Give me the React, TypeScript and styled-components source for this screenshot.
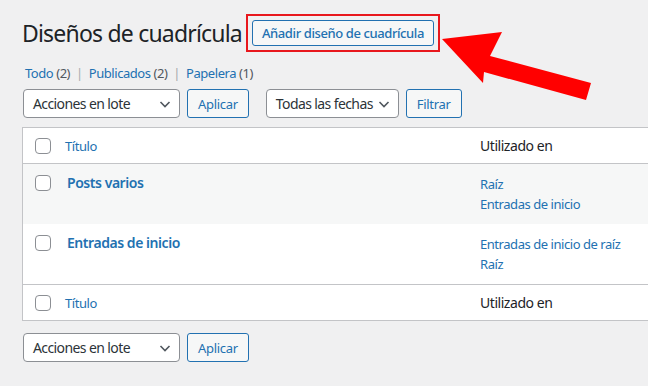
import styled, { createGlobalStyle } from 'styled-components';

const GlobalStyle = createGlobalStyle`
  html, body {
    margin: 0;
    padding: 0;
    background: #f0f0f1;
    overflow: hidden;
  }
  body {
    font-family: "Noto Sans", "Open Sans", sans-serif;
    font-size: 13px;
    letter-spacing: -0.45px;
    color: #3c434a;
  }
`;

const Wrap = styled.div`
  position: relative;
  width: 648px;
  height: 386px;
  padding: 14px 0 0 22px;
  box-sizing: border-box;
`;

const HeadingRow = styled.div`
  display: flex;
  align-items: center;
  gap: 4px;
`;

const Title = styled.h1`
  margin: 0;
  font-size: 23px;
  font-weight: 400;
  color: #1d2327;
  letter-spacing: -0.8px;
  line-height: 36px;
`;

const Highlight = styled.div`
  border: 2px solid #e8171d;
  padding: 4px;
`;

const AddButton = styled.button`
  font-family: inherit;
  font-size: 13px;
  font-weight: 500;
  letter-spacing: -0.4px;
  color: #2271b1;
  background: #f6f7f7;
  border: 1px solid #2271b1;
  border-radius: 3px;
  height: 26px;
  padding: 0 9px;
  display: block;
`;

const Arrow = styled.svg`
  position: absolute;
  left: 438px;
  top: 26px;
`;

const Filters = styled.ul`
  display: flex;
  list-style: none;
  margin: 11px 0 0 3px;
  padding: 0;
  color: #646970;
  line-height: 20px;
`;

const FilterItem = styled.li`
  a {
    color: #2271b1;
  }
  span {
    color: #50575e;
  }
  &:not(:last-child)::after {
    content: '|';
    color: #a7aaad;
    margin: 0 6px;
  }
`;

const Tablenav = styled.div<{ $top?: boolean }>`
  display: flex;
  align-items: center;
  gap: 7px;
  margin: ${(p) => (p.$top ? '6px 0 9px 1px' : '12px 0 0 1px')};
`;

const Select = styled.div<{ $w: number }>`
  width: ${(p) => p.$w}px;
  height: 29px;
  box-sizing: border-box;
  border: 1px solid #8c8f94;
  border-radius: 4px;
  background: #fff;
  display: flex;
  align-items: center;
  justify-content: space-between;
  padding: 0 7px 0 9px;
  font-size: 14px;
  letter-spacing: -0.6px;
  white-space: nowrap;
  color: #2c3338;
`;

const SecondaryButton = styled.button<{ $gap?: number }>`
  font-family: inherit;
  font-size: 13px;
  letter-spacing: -0.3px;
  color: #2271b1;
  background: #f6f7f7;
  border: 1px solid #2271b1;
  border-radius: 3px;
  height: 29px;
  padding: 0 10px;
  margin-right: ${(p) => p.$gap ?? 0}px;
`;

const Table = styled.div`
  width: 700px;
  background: #fff;
  border: 1px solid #c3c4c7;
  border-right: none;
  box-sizing: border-box;
`;

const Row = styled.div<{ $alt?: boolean; $head?: boolean; $foot?: boolean }>`
  display: grid;
  grid-template-columns: 42px 415px 1fr;
  background: ${(p) => (p.$alt ? '#f6f7f7' : '#fff')};
  height: ${(p) => (p.$head || p.$foot ? 36 : 60)}px;
  border-bottom: ${(p) => (p.$head ? '1px solid #c3c4c7' : 'none')};
  border-top: ${(p) => (p.$foot ? '1px solid #c3c4c7' : 'none')};
  align-items: ${(p) => (p.$head || p.$foot ? 'center' : 'start')};
  padding-top: ${(p) => (p.$head || p.$foot ? 0 : 9)}px;
  box-sizing: border-box;
`;

const Check = styled.span<{ $head?: boolean }>`
  display: block;
  width: 14px;
  height: 14px;
  border: 1px solid #8c8f94;
  border-radius: 4px;
  margin-left: 12px;
  margin-top: ${(p) => (p.$head ? 0 : 2)}px;
  background: #fff;
`;

const ColLink = styled.span`
  color: #2271b1;
  font-size: 13px;
`;

const PostTitle = styled.span`
  color: #2271b1;
  font-size: 14px;
  font-weight: 600;
  margin-left: 2px;
  line-height: 20px;
`;

const ColHead = styled.span`
  color: #1d2327;
  font-size: 14px;
`;

const UsedList = styled.div`
  display: flex;
  flex-direction: column;
  font-size: 13px;
  line-height: 20px;
  color: #2271b1;
  margin-top: 1px;
`;

const Chevron = () => (
  <svg width="14" height="14" viewBox="0 0 14 14">
    <path d="M2.5 5 L7 9.5 L11.5 5" fill="none" stroke="#50575e" strokeWidth="1.6" />
  </svg>
);

const rows = [
  { title: 'Posts varios', used: ['Raíz', 'Entradas de inicio'] },
  { title: 'Entradas de inicio', used: ['Entradas de inicio de raíz', 'Raíz'] },
];

export default function App() {
  return (
    <Wrap>
      <GlobalStyle />
      <HeadingRow>
        <Title>Diseños de cuadrícula</Title>
        <Highlight>
          <AddButton>Añadir diseño de cuadrícula</AddButton>
        </Highlight>
      </HeadingRow>
      <Arrow width="160" height="80" viewBox="0 0 160 80">
        <polygon points="4,13 64,6 52,30 153,57 148,74 46,46 45,57" fill="#f00" />
      </Arrow>
      <Filters>
        <FilterItem><a>Todo <span>(2)</span></a></FilterItem>
        <FilterItem><a>Publicados <span>(2)</span></a></FilterItem>
        <FilterItem><a>Papelera <span>(1)</span></a></FilterItem>
      </Filters>
      <Tablenav $top>
        <Select $w={157}>Acciones en lote<Chevron /></Select>
        <SecondaryButton $gap={10}>Aplicar</SecondaryButton>
        <Select $w={133}>Todas las fechas<Chevron /></Select>
        <SecondaryButton>Filtrar</SecondaryButton>
      </Tablenav>
      <Table>
        <Row $head>
          <Check $head />
          <ColLink>Título</ColLink>
          <ColHead>Utilizado en</ColHead>
        </Row>
        {rows.map((r, i) => (
          <Row key={r.title} $alt={i % 2 === 0}>
            <Check />
            <PostTitle>{r.title}</PostTitle>
            <UsedList>
              {r.used.map((u) => (
                <span key={u}>{u}</span>
              ))}
            </UsedList>
          </Row>
        ))}
        <Row $foot>
          <Check $head />
          <ColLink>Título</ColLink>
          <ColHead>Utilizado en</ColHead>
        </Row>
      </Table>
      <Tablenav>
        <Select $w={157}>Acciones en lote<Chevron /></Select>
        <SecondaryButton>Aplicar</SecondaryButton>
      </Tablenav>
    </Wrap>
  );
}
